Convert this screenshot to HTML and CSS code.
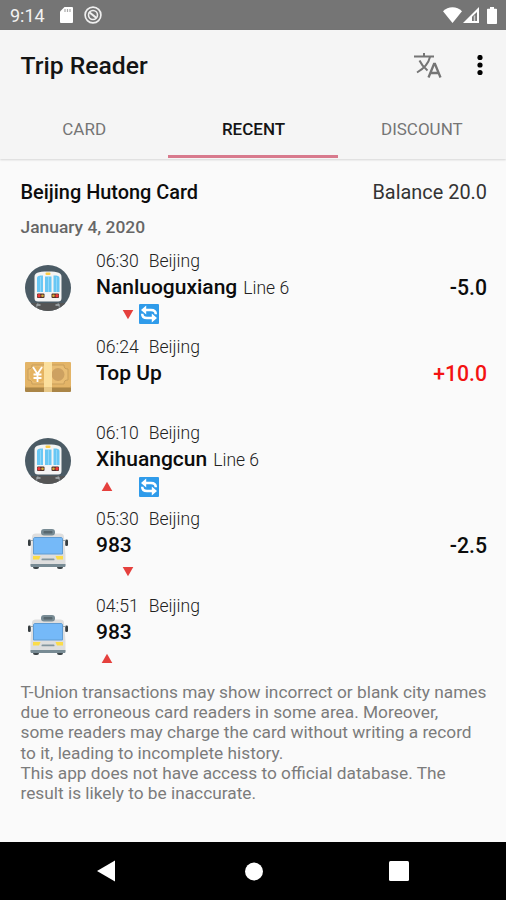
FILE: index.html
```html
<!DOCTYPE html>
<html lang="en">
<head>
  <meta charset="UTF-8" />
  <meta name="viewport" content="width=device-width, initial-scale=1.0" />
  <title>Trip Reader</title>
  <link rel="stylesheet" href="styles.css">
</head>
<body>
  <!-- Shared icons -->
  <svg class="defs" width="0" height="0" aria-hidden="true">
    <symbol id="icon-metro" viewBox="0 0 46 46">
      <clipPath id="tunnel"><circle cx="23" cy="23" r="23" /></clipPath>
      <circle cx="23" cy="23" r="23" fill="#4b5b65" />
      <g clip-path="url(#tunnel)">
        <rect x="0" y="38" width="46" height="8" fill="#555" />
        <path d="M13 38l-3 8M33 38l3 8" stroke="#7d8386" stroke-width="1.500" />
        <path d="M11.500 40h4M30.500 40h4" stroke="#a9b0b3" stroke-width="1.500" />
      </g>
      <path d="M9.500 12c0-4 3-5.500 13.500-5.500S36.500 8 36.500 12v21c0 2.500-1 3.500-3.500 3.500H13c-2.500 0-3.500-1-3.500-3.500z" fill="#f4f4f4" />
      <rect x="20.500" y="7.500" width="5" height="2.500" rx="1" fill="#fccb45" />
      <path d="M12 13c0-2 2-2.500 6-2.500V27h-6zM20 11.500h6.500V27H20zM28.500 10.500c4 0 6 .5 6 2.500v14h-6z" fill="#68c7f4" />
      <path d="M15.500 12v15M23.500 12v15M31.500 12v15" stroke="#8ed7fa" stroke-width="1" />
      <rect x="12" y="28.500" width="7.500" height="4.500" rx="1" fill="#4d302b" />
      <rect x="26.500" y="28.500" width="7.500" height="4.500" rx="1" fill="#4d302b" />
      <circle cx="14" cy="30.800" r="1.700" fill="#ef3939" /><circle cx="17.500" cy="30.800" r="1.300" fill="#d9ae36" />
      <circle cx="32" cy="30.800" r="1.700" fill="#ef3939" /><circle cx="28.500" cy="30.800" r="1.300" fill="#d9ae36" />
    </symbol>
    <symbol id="icon-money" viewBox="0 0 46 30">
      <rect x="0" y="22" width="46" height="8" rx="1" fill="#aa8547" />
      <path d="M0 25.500h46" stroke="#c59a52" stroke-width="1" />
      <rect x="0" y="0" width="46" height="25" rx="1" fill="#e3b467" />
      <path d="M7 3h32c0 3 1 4 4 4v11c-3 0-4 1-4 4H7c0-3-1-4-4-4V7c3 0 4-1 4-4z" fill="#e9bd73" stroke="#c99f5c" stroke-width="1" />
      <circle cx="12.500" cy="12.500" r="8" fill="#e5b361" />
      <circle cx="33" cy="12.500" r="6.500" fill="#cda161" />
      <path d="M8 5l4.500 7L17 5M12.500 12v8M8.500 12.500h8M8.500 16h8" fill="none" stroke="#fff" stroke-width="1.800" />
      <rect x="19" y="0" width="8" height="30" fill="#fbdf9d" />
      <path d="M19 25h8v5h-8z" fill="#e8c887" />
    </symbol>
    <symbol id="icon-bus" viewBox="0 0 40 40">
      <rect x="5" y="34" width="6" height="6" rx="2" fill="#3d4549" />
      <rect x="29" y="34" width="6" height="6" rx="2" fill="#3d4549" />
      <path d="M4 8C4 5.500 5.500 4.500 8 4.500h24c2.500 0 4 1 4 3.500l1.500 18v10c0 1-.5 1.500-1.500 1.500H4c-1 0-1.500-.5-1.500-1.500V26z" fill="#dedede" />
      <path d="M2.500 35h35v1.500c0 1-.5 1.500-1.500 1.500H4c-1 0-1.500-.5-1.500-1.500z" fill="#788b94" />
      <rect x="13" y="0" width="14" height="6.500" rx="3" fill="#788b94" />
      <rect x="15.500" y="2" width="9" height="2.500" rx="1" fill="#58686f" />
      <path d="M7 8.500h26c1 0 1.500.5 1.500 1.500v15h-29V10c0-1 .5-1.500 1.500-1.500z" fill="#75b9f8" stroke="#609cd3" stroke-width="1" />
      <path d="M5 27h7.500l-1.500 3.500H5zM35 27h-7.500l1.500 3.500h6z" fill="#fbdc48" />
      <rect x="13.500" y="29.500" width="13" height="1.800" rx=".9" fill="#82959e" />
      <rect x="0" y="10.500" width="2.800" height="6.500" rx="1.300" fill="#363d40" />
      <rect x="37.200" y="10.500" width="2.800" height="6.500" rx="1.300" fill="#363d40" />
      <path d="M2.500 11.500H5M35 11.500h2.500" stroke="#9aa6ab" stroke-width="1" />
    </symbol>
    <symbol id="icon-transfer" viewBox="0 0 20 20">
      <rect x="0" y="0" width="20" height="20" rx="1" fill="#2f9bea" />
      <path d="M7.200 1.500v9L2 6zM12.800 9.500v9l5.200-4.500z" fill="#fff" />
      <path d="M6 6h6c3 0 4.800 1.200 4.800 4.300M14 14H8c-3 0-4.800-1.200-4.800-4.300" fill="none" stroke="#fff" stroke-width="2.500" />
    </symbol>
    <symbol id="icon-up" viewBox="0 0 12 11">
      <path d="M6 .8L11.300 10H.7z" fill="#e5403d" />
    </symbol>
    <symbol id="icon-down" viewBox="0 0 12 11">
      <path d="M6 10.200L11.300 1H.7z" fill="#e5403d" />
    </symbol>
  </svg>

  <div class="status-bar">
    <span class="clock">9:14</span>
    <svg class="sd-card" width="13" height="16" viewBox="0 0 13 16"><path d="M4.500 0H12a1 1 0 0 1 1 1v14a1 1 0 0 1-1 1H1a1 1 0 0 1-1-1V4.500z" fill="#fff" /><path d="M5 2v3M7.500 2v3M10 2v3" stroke="#aaa" stroke-width="1.200" /></svg>
    <svg class="sync" width="18" height="18" viewBox="0 0 18 18" fill="none" stroke="#efefef"><circle cx="9" cy="9" r="7.900" stroke-width="1.700" /><circle cx="9" cy="9" r="4.500" stroke-width="1.600" /><path d="M5 6l7.500 6" stroke-width="2.200" /></svg>
    <div class="signals">
      <svg width="19" height="16" viewBox="0 0 19 16"><path d="M9.500 16L0 4.200C5-1.200 14-1.200 19 4.200z" fill="#fff" /></svg>
      <svg width="16" height="16" viewBox="0 0 16 16"><path d="M16 0v16H0z" fill="#fff" /><path d="M14 5v9H9V9.800z" fill="#777" /><path d="M11.500 8.500V14" stroke="#ccc" stroke-width="1.500" /></svg>
      <svg width="10" height="17" viewBox="0 0 10 17"><path d="M3 0h4v1.800h2.200a.8.8 0 0 1 .8.800v13.600a.8.8 0 0 1-.8.800H.8a.8.8 0 0 1-.8-.8V2.600a.8.8 0 0 1 .8-.8H3z" fill="#fff" /></svg>
    </div>
  </div>

  <header>
    <div class="toolbar">
      <h1>Trip Reader</h1>
      <svg class="translate" width="28" height="26" viewBox="0 0 28 26" fill="none" stroke="#757575" stroke-width="2"><path d="M0 3.500h20M10 0v3.500M5.500 7.500c2 4.500 5 7.500 8 10M16 4c-1.500 6.500-6 11.500-13 15.500" /><path d="M14.500 24.500L20 11h1l5.500 13.500M16.500 20h8" stroke-width="2.300" /></svg>
      <svg class="more" width="6" height="22" viewBox="0 0 6 22"><circle cx="3" cy="2.500" r="2.600" /><circle cx="3" cy="10" r="2.600" /><circle cx="3" cy="17.500" r="2.600" /></svg>
    </div>
    <nav>
      <a>CARD</a>
      <a class="active">RECENT</a>
      <a>DISCOUNT</a>
    </nav>
  </header>

  <main>
    <div class="card-info">
      <h2>Beijing Hutong Card</h2>
      <span class="balance">Balance 20.0</span>
    </div>
    <h3>January 4, 2020</h3>

    <div class="trip">
      <svg class="trip-icon metro"><use href="#icon-metro" /></svg>
      <div class="details">
        <div class="when"><span>06:30</span><span>Beijing</span></div>
        <div class="place"><b>Nanluoguxiang</b><span>Line 6</span></div>
        <div class="marks"><i></i><svg class="arrow"><use href="#icon-down" /></svg><svg class="transfer"><use href="#icon-transfer" /></svg></div>
      </div>
      <span class="amount">-5.0</span>
    </div>
    <div class="trip">
      <svg class="trip-icon money"><use href="#icon-money" /></svg>
      <div class="details">
        <div class="when"><span>06:24</span><span>Beijing</span></div>
        <div class="place"><b>Top Up</b></div>
      </div>
      <span class="amount topup">+10.0</span>
    </div>
    <div class="trip">
      <svg class="trip-icon metro"><use href="#icon-metro" /></svg>
      <div class="details">
        <div class="when"><span>06:10</span><span>Beijing</span></div>
        <div class="place"><b>Xihuangcun</b><span>Line 6</span></div>
        <div class="marks"><svg class="arrow"><use href="#icon-up" /></svg><i></i><svg class="transfer"><use href="#icon-transfer" /></svg></div>
      </div>
    </div>
    <div class="trip">
      <svg class="trip-icon bus"><use href="#icon-bus" /></svg>
      <div class="details">
        <div class="when"><span>05:30</span><span>Beijing</span></div>
        <div class="place"><b>983</b></div>
        <div class="marks"><i></i><svg class="arrow"><use href="#icon-down" /></svg></div>
      </div>
      <span class="amount">-2.5</span>
    </div>
    <div class="trip">
      <svg class="trip-icon bus"><use href="#icon-bus" /></svg>
      <div class="details">
        <div class="when"><span>04:51</span><span>Beijing</span></div>
        <div class="place"><b>983</b></div>
        <div class="marks"><svg class="arrow"><use href="#icon-up" /></svg></div>
      </div>
    </div>

    <p class="notice">T-Union transactions may show incorrect or blank city names<br>due to erroneous card readers in some area. Moreover,<br>some readers may charge the card without writing a record<br>to it, leading to incomplete history.<br>This app does not have access to official database. The<br>result is likely to be inaccurate.</p>
  </main>

  <div class="nav-bar">
    <svg width="18" height="22" viewBox="0 0 18 22"><path d="M0 11L18 .5v21z" fill="#fff" /></svg>
    <svg class="home" width="18" height="19" viewBox="0 0 18 19"><circle cx="9" cy="9.500" r="9" fill="#fff" /></svg>
    <svg width="20" height="20" viewBox="0 0 20 20"><rect width="20" height="20" rx="1.500" fill="#fff" /></svg>
  </div>
</body>
</html>
```
FILE: styles.css
```css
* { box-sizing: border-box; }
body { margin: 0; width: 506px; height: 900px; display: flex; flex-direction: column; overflow: hidden; font-family: Roboto, sans-serif; background: #fafafa; color: #0c0c0c; }
svg { display: block; flex: none; }
h1, h2, h3, p { margin: 0; }
.defs { position: absolute; }

.status-bar { height: 30px; flex: none; display: flex; align-items: center; padding: 0 9px 0 10px; background: #757575; color: #f2f2f2; }
.clock { width: 50px; font-size: 18px; line-height: 30px; padding-top: 2px; }
.sync { margin-left: 11px; }
.signals { margin-left: auto; display: flex; align-items: center; gap: 1px; }
.signals svg:last-child { margin-left: 7px; }

header { height: 129px; flex: none; background: #f5f5f5; box-shadow: 0 1px 2px rgba(0,0,0,0.15); }
.toolbar { height: 71px; display: flex; align-items: center; padding: 0 23px 0 20.500px; }
.toolbar h1 { font-size: 24.700px; font-weight: 500; line-height: 30px; color: #141414; }
.translate { margin-left: auto; }
.more { margin-left: 35px; }
nav { display: flex; height: 57px; }
nav a { flex: 1; text-align: center; font-size: 17px; line-height: 57px; color: #757575; }
nav a.active { color: #151515; font-weight: 500; padding-left: 1px; box-shadow: inset 0 -3px #d87a8d; }

main { flex: 1; padding: 19px 19px 0 20.500px; }
.card-info { display: flex; justify-content: space-between; align-items: center; height: 28px; font-size: 19.900px; }
.card-info h2 { font-size: 19.900px; font-weight: 500; }
.balance { color: #333; }
h3 { font-size: 17.400px; font-weight: 500; line-height: 24px; margin: 9px 0 9.500px; color: #666; }

.trip { display: flex; height: 86.300px; }
.metro { width: 46px; height: 46px; margin: 16.500px 25px 0 4.500px; }
.money { width: 46px; height: 30px; margin: 27.500px 25px 0 4.500px; }
.bus { width: 40px; height: 40px; margin: 21.500px 28px 0 7.500px; }
.details { flex: 1; }
.when { display: flex; gap: 10px; font-size: 17.600px; font-weight: 300; line-height: 24px; color: #222; }
.place { display: flex; align-items: baseline; gap: 6px; line-height: 29px; font-size: 17.500px; font-weight: 300; color: #222; }
.place b { font-size: 21px; font-weight: 500; color: #0c0c0c; }
.marks { display: flex; align-items: center; height: 23px; padding-left: 5px; }
.arrow { width: 12px; height: 11px; margin-right: 5px; }
.marks i { width: 21px; }
.transfer { width: 20px; height: 20px; }
.amount { padding-top: 24px; font-size: 21.200px; font-weight: 500; line-height: 29px; }
.topup { color: #f31212; }
.notice { margin-top: 2px; font-size: 17.300px; line-height: 20.200px; color: #7c7c7c; white-space: nowrap; }

.nav-bar { height: 58px; flex: none; display: flex; align-items: center; justify-content: space-between; padding: 0 97px; background: #000; }
.home { margin-left: 3px; }
```
